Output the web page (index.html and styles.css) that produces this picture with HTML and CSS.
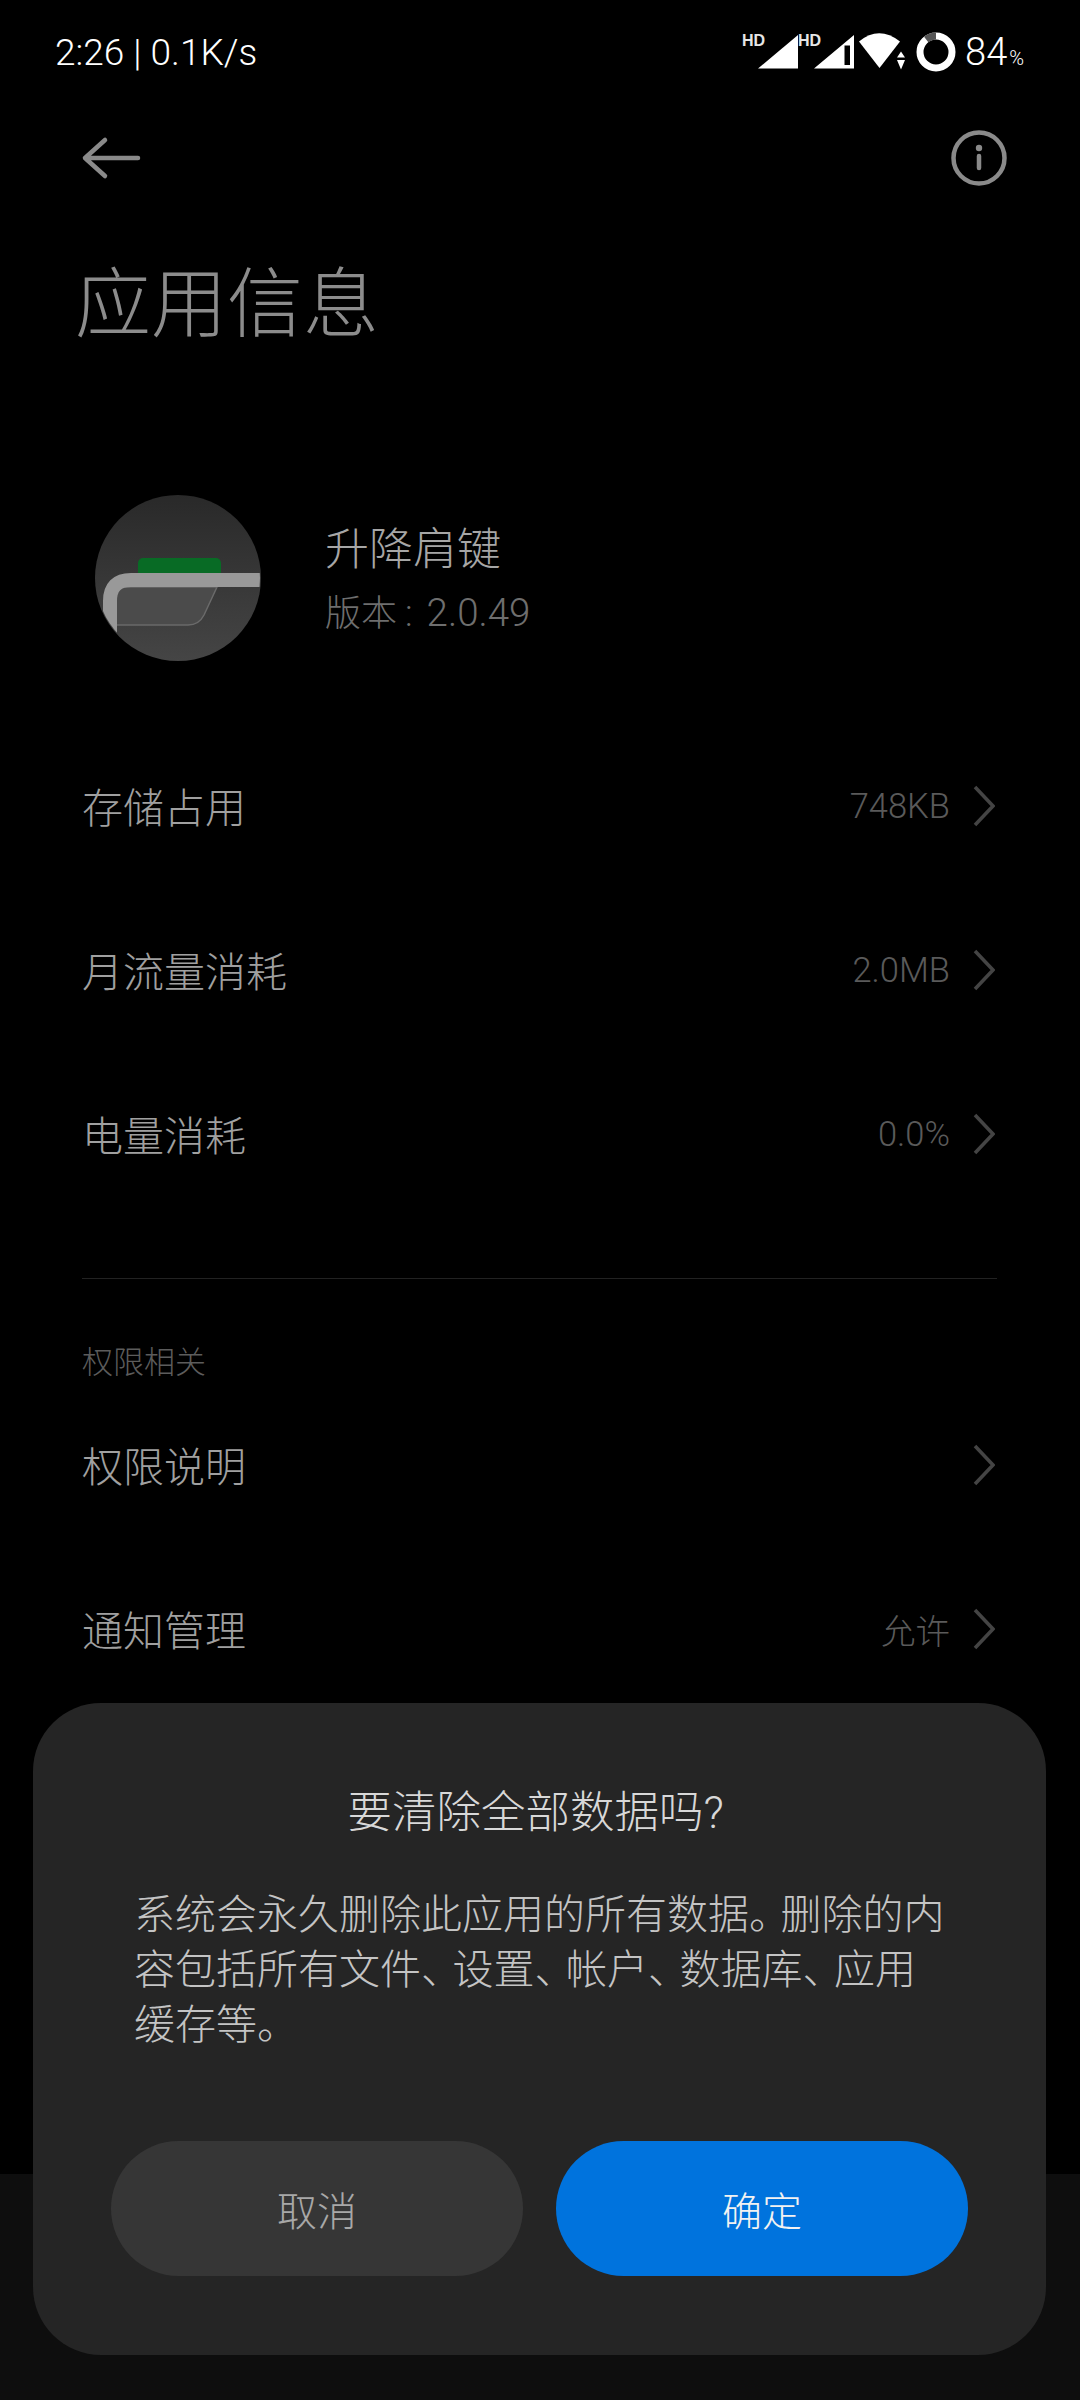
FILE: index.html
```html
<!DOCTYPE html>
<html lang="zh-CN">
<head>
    <meta charset="UTF-8">
    <meta name="viewport" content="width=device-width, initial-scale=1.0">
    <title>应用信息</title>
    <link rel="stylesheet" href="styles.css">
</head>
<body>
    <div class="screen">
        <div class="status-bar">
            <span class="status-left">2:26 | 0.1K/s</span>
            <div class="status-right">
                <div class="signal">
                    <span class="hd">HD</span>
                    <svg width="44" height="36" viewBox="0 0 44 36"><path d="M4 34.500L44 34.500V1z" fill="#fff"/></svg>
                </div>
                <div class="signal">
                    <span class="hd">HD</span>
                    <svg width="44" height="36" viewBox="0 0 44 36"><path fill-rule="evenodd" d="M4 34.500L44 34.500V1zM34.500 11.500V31H40V11.500z" fill="#fff"/></svg>
                </div>
                <svg class="wifi" width="48" height="38" viewBox="0 0 48 38">
                    <path d="M0 8.500Q20 -8 41 8.500L20.500 35z" fill="#fff"/>
                    <path d="M42 18.500L46 24.500H38zM42 36.500L46 27H38z" fill="#fff"/>
                </svg>
                <svg class="battery" width="40" height="40" viewBox="0 0 40 40">
                    <circle cx="20" cy="20" r="16" fill="none" stroke="#fff" stroke-width="7"/>
                    <path d="M20 4A16 16 0 0 0 10.200 7.400" fill="none" stroke="#555" stroke-width="7"/>
                </svg>
                <span class="battery-num">84<small>%</small></span>
            </div>
        </div>

        <div class="header">
            <svg width="62" height="44" viewBox="0 0 62 44"><path d="M59 22H6M26 4L6 22L26 40" fill="none" stroke="#8a8a8a" stroke-width="4.500" stroke-linecap="round" stroke-linejoin="round"/></svg>
            <svg width="56" height="56" viewBox="0 0 56 56">
                <circle cx="28" cy="28" r="25.500" fill="none" stroke="#8a8a8a" stroke-width="4.500"/>
                <circle cx="28" cy="18" r="3.200" fill="#8a8a8a"/>
                <path d="M28 26V38" stroke="#8a8a8a" stroke-width="4.500" stroke-linecap="round"/>
            </svg>
        </div>

        <h1 class="page-title">应用信息</h1>

        <div class="app-info">
            <svg class="app-icon" width="166" height="166" viewBox="0 0 166 166">
                <defs>
                    <linearGradient id="iconBg" x1="0" y1="0" x2="0" y2="1">
                        <stop offset="0" stop-color="#292929"/>
                        <stop offset="1" stop-color="#454545"/>
                    </linearGradient>
                    <clipPath id="iconClip"><circle cx="83" cy="83" r="82"/></clipPath>
                </defs>
                <circle cx="83" cy="83" r="83" fill="url(#iconBg)"/>
                <g clip-path="url(#iconClip)">
                    <rect x="43" y="63" width="83" height="24" rx="5" fill="#086b25"/>
                    <path d="M20 92H122L109 120Q104 130 93 130H20z" fill="#4b4b4b" stroke="#6a6a6a" stroke-width="1.500"/>
                    <path d="M166 85H36Q15 85 15 106V166" fill="none" stroke="#999" stroke-width="14"/>
                </g>
            </svg>
            <div class="app-text">
                <div class="app-name">升降肩键</div>
                <div class="app-version">版本<span class="colon">:</span><span class="version-num">2.0.49</span></div>
            </div>
        </div>

        <div class="list">
            <div class="row">
                <span class="row-label">存储占用</span>
                <span class="row-value">748KB</span>
                <svg class="chevron" width="22" height="42" viewBox="0 0 22 42"><path d="M2 2L20 21L2 40" fill="none" stroke="#444" stroke-width="3.500"/></svg>
            </div>
            <div class="row">
                <span class="row-label">月流量消耗</span>
                <span class="row-value">2.0MB</span>
                <svg class="chevron" width="22" height="42" viewBox="0 0 22 42"><path d="M2 2L20 21L2 40" fill="none" stroke="#444" stroke-width="3.500"/></svg>
            </div>
            <div class="row">
                <span class="row-label">电量消耗</span>
                <span class="row-value">0.0%</span>
                <svg class="chevron" width="22" height="42" viewBox="0 0 22 42"><path d="M2 2L20 21L2 40" fill="none" stroke="#444" stroke-width="3.500"/></svg>
            </div>
        </div>

        <div class="divider"></div>
        <div class="section-title">权限相关</div>

        <div class="list">
            <div class="row">
                <span class="row-label">权限说明</span>
                <svg class="chevron" width="22" height="42" viewBox="0 0 22 42"><path d="M2 2L20 21L2 40" fill="none" stroke="#444" stroke-width="3.500"/></svg>
            </div>
            <div class="row">
                <span class="row-label">通知管理</span>
                <span class="row-value">允许</span>
                <svg class="chevron" width="22" height="42" viewBox="0 0 22 42"><path d="M2 2L20 21L2 40" fill="none" stroke="#444" stroke-width="3.500"/></svg>
            </div>
        </div>

        <div class="bottom-bar"></div>

        <div class="dialog">
            <div class="dialog-title">要清除全部数据吗?</div>
            <p class="dialog-text">系统会永久删除此应用的所有数据<span class="punc">。</span>删除的内<br>容包括所有文件<span class="punc">、</span>设置<span class="punc">、</span>帐户<span class="punc">、</span>数据库<span class="punc">、</span>应用<br>缓存等<span class="punc">。</span></p>
            <div class="dialog-buttons">
                <button class="btn btn-cancel">取消</button>
                <button class="btn btn-ok">确定</button>
            </div>
        </div>
    </div>
</body>
</html>
```

FILE: styles.css
```css
* {
    box-sizing: border-box;
}
body {
    margin: 0;
    background: #000;
    font-family: Roboto, "Noto Sans CJK SC", sans-serif;
    font-weight: 300;
}
.screen {
    position: relative;
    width: 1080px;
    height: 2400px;
    overflow: hidden;
    background: #000;
}
.status-bar {
    height: 104px;
    padding: 0 56px 0 55px;
    display: flex;
    justify-content: space-between;
    align-items: center;
    color: #fff;
}
.status-left {
    font-size: 37px;
}
.status-right {
    display: flex;
    align-items: center;
}
.signal {
    position: relative;
    width: 56px;
    height: 36px;
    display: flex;
    justify-content: flex-end;
}
.hd {
    position: absolute;
    left: 0;
    top: -1px;
    font-size: 16px;
    line-height: 16px;
    font-weight: 700;
    color: #e6e6e6;
    font-family: "Liberation Sans", sans-serif;
}
.wifi {
    margin-left: 5px;
}
.battery {
    margin-left: 9px;
}
.battery-num {
    margin-left: 9px;
    font-size: 38px;
}
.battery-num small {
    font-size: 20px;
    margin-left: 2px;
}
.header {
    height: 108px;
    padding: 0 73px 0 79px;
    display: flex;
    justify-content: space-between;
    align-items: center;
}
.page-title {
    margin: 43px 0 0 75px;
    font-size: 76px;
    line-height: 100px;
    font-weight: 300;
    color: #8c8c8c;
}
.app-info {
    margin: 140px 0 0 95px;
    display: flex;
    align-items: center;
    gap: 64px;
}
.app-icon {
    display: block;
}
.app-text {
    padding-top: 2px;
}
.app-name {
    font-size: 44px;
    line-height: 60px;
    color: #a6a6a6;
}
.app-version {
    font-size: 36px;
    line-height: 50px;
    margin-top: 8px;
    color: #6e6e6e;
}
.version-num {
    font-size: 38.500px;
}
.colon {
    margin: 0 14px 0 8px;
}
.list {
    margin-top: 63px;
}
.row {
    height: 164px;
    padding: 0 85px 0 82px;
    display: flex;
    align-items: center;
}
.row-label {
    flex: 1;
    padding-bottom: 2px;
    font-size: 41px;
    color: #a0a0a0;
}
.row-value {
    font-size: 34.500px;
    color: #5a5a5a;
    margin-right: 23px;
}
.divider {
    height: 1px;
    margin: 62px 83px 0 82px;
    background: #222;
}
.section-title {
    margin: 64px 0 0 82px;
    font-size: 31px;
    line-height: 40px;
    color: #5c5c5c;
}
.section-title + .list {
    margin-top: 0;
}
.bottom-bar {
    position: absolute;
    left: 0;
    right: 0;
    bottom: 0;
    height: 226px;
    background: #0e0e0e;
}
.dialog {
    position: absolute;
    left: 33px;
    top: 1703px;
    width: 1013px;
    height: 652px;
    padding: 80px 78px 79px;
    background: #252525;
    border-radius: 68px;
}
.dialog-title {
    padding-right: 8px;
    font-size: 44.500px;
    line-height: 60px;
    text-align: center;
    color: #d8d8d8;
}
.dialog-text {
    margin: 45px 0 0;
    padding: 0 15px 0 23px;
    font-size: 41px;
    line-height: 55px;
    color: #c4c4c4;
}
.punc {
    font-feature-settings: "halt";
    letter-spacing: 11px;
}
.dialog-buttons {
    margin-top: 88px;
    display: flex;
    gap: 33px;
}
.btn {
    flex: 1;
    height: 135px;
    border: none;
    border-radius: 68px;
    font-family: inherit;
    font-weight: 300;
    font-size: 40px;
}
.btn-cancel {
    background: #363636;
    color: #a8a8a8;
}
.btn-ok {
    background: #0073dd;
    color: #f2f2f2;
}
```
